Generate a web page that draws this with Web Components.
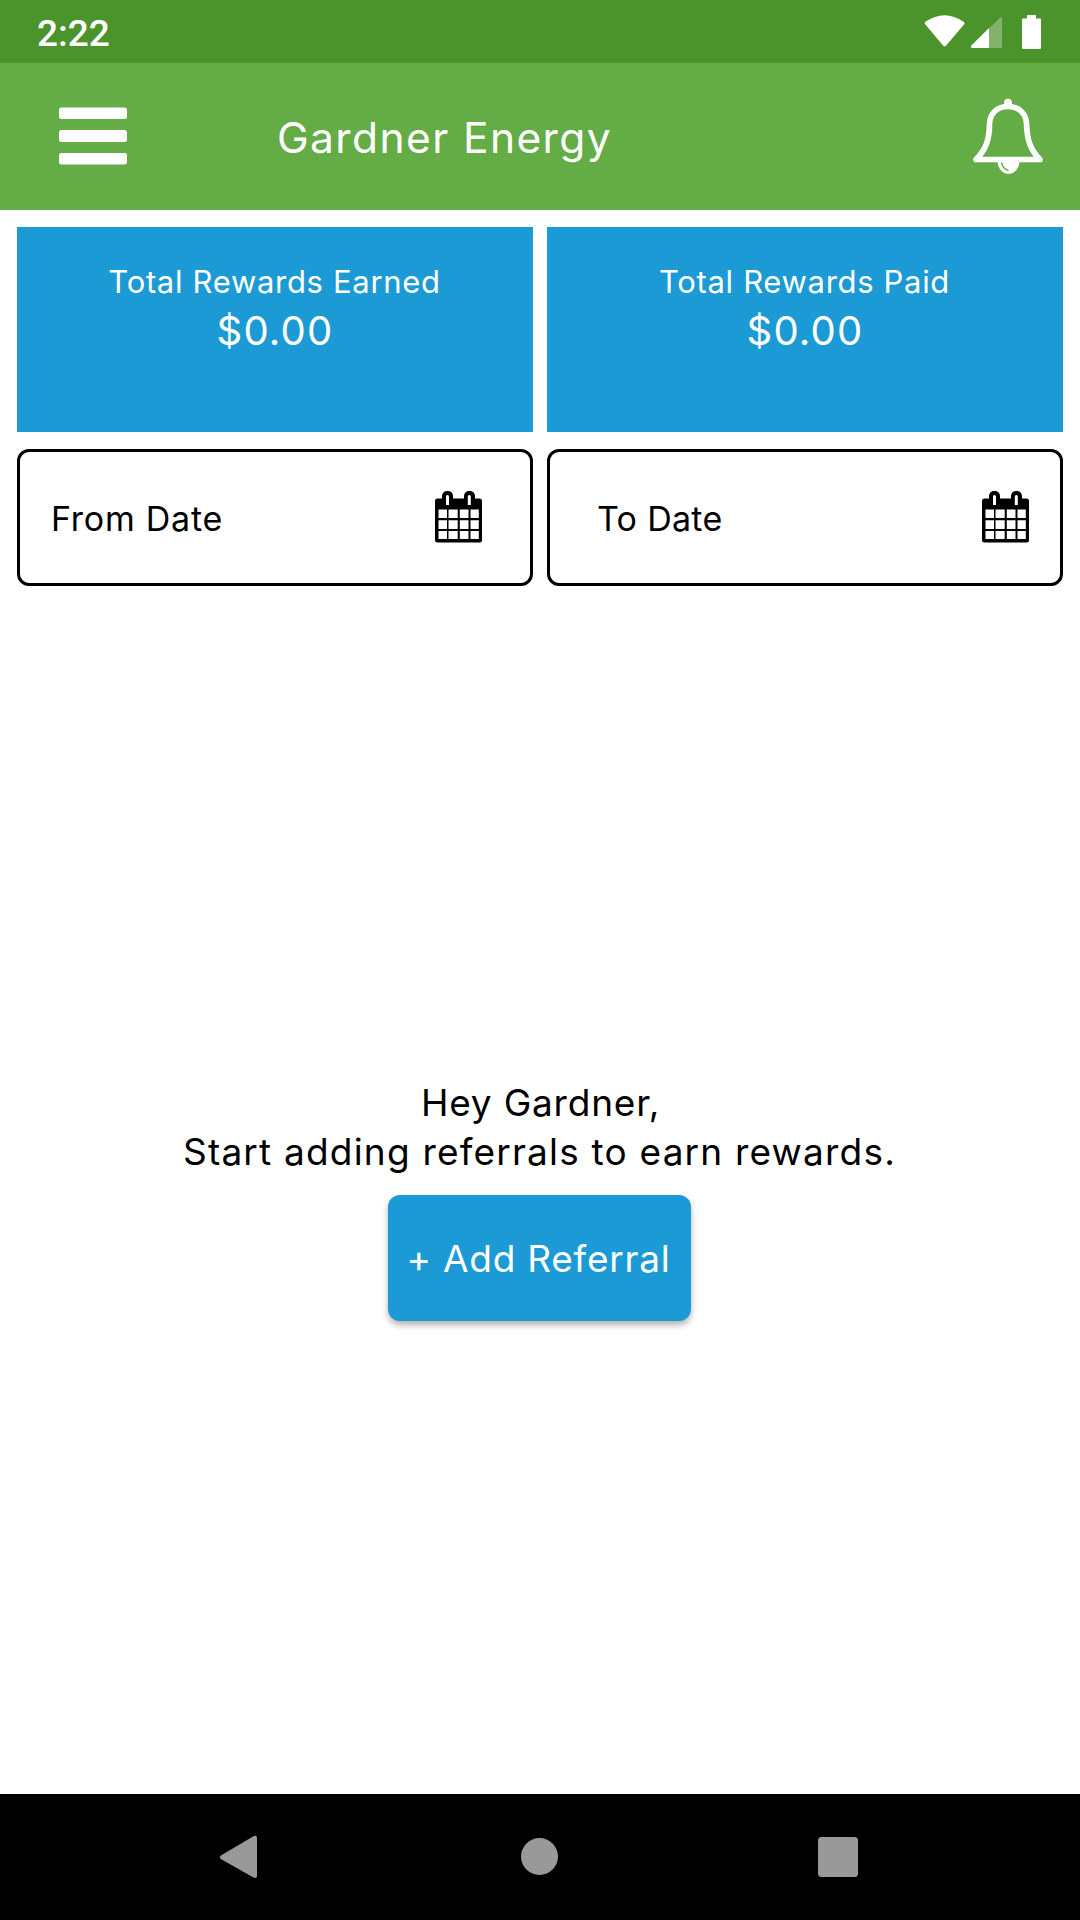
<!DOCTYPE html>
<html lang="en">
<head>
<meta charset="utf-8">
<title>Gardner Energy</title>
<style>
  body {
    margin: 0;
    font-family: Inter, "Liberation Sans", sans-serif;
  }
</style>
</head>
<body>
<rewards-screen></rewards-screen>

<script>
class StatusBar extends HTMLElement {
  constructor() {
    super();
    this.attachShadow({ mode: 'open' });
  }

  connectedCallback() {
    this.shadowRoot.innerHTML = `
      <style>
        :host {
          display: flex;
          align-items: center;
          justify-content: space-between;
          box-sizing: border-box;
          height: 63px;
          padding: 0 36px 0 37px;
          background: #4b932b;
          color: #fff;
          font: 500 37px/44px Roboto, sans-serif;
        }
        span {
          padding-top: 4px;
        }
        svg {
          display: block;
        }
      </style>
      <span><slot></slot></span>
      <svg width="121" height="36" viewBox="923 13 121 36" fill="#fff">
        <path d="M925.2 23.2Q924 22 925.4 20.8Q944.5 7.6 963.7 20.8Q965.3 22 964 23.4L946.2 44.5Q944.6 46.2 943 44.5Z"/>
        <path d="M971.4 44.6L1000.6 16.3Q1002 15.4 1002 17V45.5Q1002 47 1000.5 47H972.3Q969.8 46.6 971.4 44.6Z" opacity=".3"/>
        <path d="M971.4 44.6L989 27V47H972.3Q969.8 46.6 971.4 44.6Z"/>
        <path d="M1027 14H1036V17.5H1040Q1041 17.5 1041 18.5V46.8Q1041 48 1039.8 48H1023.2Q1022 48 1022 46.8V18.5Q1022 17.5 1023 17.5H1027Z"/>
      </svg>
    `;
  }
}

class AppBar extends HTMLElement {
  constructor() {
    super();
    this.attachShadow({ mode: 'open' });
  }

  connectedCallback() {
    this.shadowRoot.innerHTML = `
      <style>
        :host {
          display: flex;
          align-items: center;
          box-sizing: border-box;
          height: 147px;
          padding: 0 36px 1px 59px;
          background: #64ac45;
          color: #fff;
        }
        h1 {
          flex: 1;
          margin: 0 0 0 150px;
          padding-top: 3px;
          font-size: 42.5px;
          font-weight: 400;
          line-height: 50px;
          letter-spacing: 1.4px;
        }
        svg {
          display: block;
        }
      </style>
      <svg width="68" height="58" viewBox="0 0 68 58" fill="#fff">
        <rect y="0.5" width="68" height="11.5" rx="2.5"/>
        <rect y="23" width="68" height="12" rx="2.5"/>
        <rect y="46" width="68" height="11.5" rx="2.5"/>
      </svg>
      <h1><slot></slot></h1>
      <svg width="72" height="78" viewBox="972 96.5 72 78" fill="none" stroke="#fff">
        <path d="M1008 106C996 106 990 114 989.5 123C989.5 139 986 149 976 159H1040C1030 149 1027 139 1026.5 123C1026 114 1020 106 1008 106Z" stroke-width="5.7" stroke-linejoin="round"/>
        <path d="M1004.5 106V102A3.5 3.5 0 0 1 1011.5 102V106Z" fill="#fff" stroke-width="1"/>
        <path d="M998 161A10.5 12 0 0 0 1019 161Z" fill="#fff" stroke-width="1"/>
        <path d="M1001.5 162Q1003 168.5 1008.5 170" stroke="#64ac45" stroke-width="1.3"/>
      </svg>
    `;
  }
}

class RewardCard extends HTMLElement {
  constructor() {
    super();
    this.attachShadow({ mode: 'open' });
  }

  connectedCallback() {
    this.shadowRoot.innerHTML = `
      <style>
        :host {
          display: block;
          box-sizing: border-box;
          height: 205px;
          padding-top: 36px;
          background: #1b9ad6;
          color: #fff;
          text-align: center;
        }
        .label {
          padding-right: 1px;
          font-size: 31px;
          line-height: 38px;
          letter-spacing: 0.68px;
        }
        .amount {
          margin-top: 6px;
          font-size: 40px;
          line-height: 48px;
          letter-spacing: 1.2px;
        }
      </style>
      <div class="label">${this.getAttribute('label')}</div>
      <div class="amount"><slot></slot></div>
    `;
  }
}

class DateField extends HTMLElement {
  constructor() {
    super();
    this.attachShadow({ mode: 'open' });
  }

  connectedCallback() {
    this.shadowRoot.innerHTML = `
      <style>
        :host {
          display: flex;
          align-items: center;
          justify-content: space-between;
          box-sizing: border-box;
          height: 137px;
          padding: 0 var(--field-end, 48px) 0 var(--field-start, 31px);
          border: 3px solid #000;
          border-radius: 12px;
          color: #000;
          font-size: 34px;
          line-height: 42px;
          letter-spacing: var(--field-spacing, 0.75px);
        }
        span {
          padding-top: 2px;
        }
        svg {
          display: block;
          padding-bottom: 1px;
        }
      </style>
      <span><slot></slot></span>
      <svg width="47" height="52" viewBox="0 0 47 52">
        <path d="M2.5 7.5H44.5Q47 7.5 47 10V49Q47 51.5 44.5 51.5H2.5Q0 51.5 0 49V10Q0 7.5 2.5 7.5Z"/>
        <rect x="7" y="0" width="11" height="16" rx="5"/>
        <rect x="29" y="0" width="11" height="16" rx="5"/>
        <path fill="#fff" d="M11 5.5Q11 4 12.5 4T14 5.5V14H11ZM32.8 5.5Q32.8 4 34.3 4T35.8 5.5V14H32.8Z"/>
        <path fill="#fff" d="M3.5 18.5H12V27H3.5ZM13.5 18.5H22.7V27H13.5ZM24.8 18.5H33.5V27H24.8ZM35.5 18.5H43.8V27H35.5ZM3.5 29.3H12V38H3.5ZM13.5 29.3H22.7V38H13.5ZM24.8 29.3H33.5V38H24.8ZM35.5 29.3H43.8V38H35.5ZM3.5 40H12V48H3.5ZM13.5 40H22.7V48H13.5ZM24.8 40H33.5V48H24.8ZM35.5 40H43.8V48H35.5Z"/>
      </svg>
    `;
  }
}

class AddButton extends HTMLElement {
  constructor() {
    super();
    this.attachShadow({ mode: 'open' });
  }

  connectedCallback() {
    this.shadowRoot.innerHTML = `
      <style>
        :host {
          display: block;
        }
        button {
          display: block;
          width: 303px;
          height: 126px;
          padding: 2px 2px 0 0;
          border: none;
          border-radius: 12px;
          background: #1b9ad6;
          box-shadow: 0 4px 6px rgba(0, 0, 0, 0.3);
          color: #fff;
          font: inherit;
          font-size: 37px;
          letter-spacing: 0.75px;
          white-space: nowrap;
        }
      </style>
      <button><slot></slot></button>
    `;
  }
}

class NavBar extends HTMLElement {
  constructor() {
    super();
    this.attachShadow({ mode: 'open' });
  }

  connectedCallback() {
    this.shadowRoot.innerHTML = `
      <style>
        :host {
          display: flex;
          align-items: center;
          justify-content: space-between;
          box-sizing: border-box;
          height: 126px;
          padding: 0 222px 0 219px;
          background: #000;
        }
        svg {
          display: block;
        }
      </style>
      <svg width="40" height="44" viewBox="0 0 40 44" fill="#999">
        <path d="M1.8 20.5L34.5 1.2Q38 0 38 3V41Q38 44 34.5 42.6L1.8 24Q0 22.3 1.8 20.5Z"/>
      </svg>
      <svg width="38" height="38" viewBox="0 0 38 38" fill="#999">
        <circle cx="19.5" cy="18.5" r="18.5"/>
      </svg>
      <svg width="40" height="40" viewBox="0 0 40 40" fill="#999">
        <rect width="40" height="40" rx="3.5"/>
      </svg>
    `;
  }
}

class RewardsScreen extends HTMLElement {
  constructor() {
    super();
    this.attachShadow({ mode: 'open' });
  }

  connectedCallback() {
    this.shadowRoot.innerHTML = `
      <style>
        :host {
          display: flex;
          flex-direction: column;
          width: 1080px;
          height: 1920px;
          background: #fff;
          color: #000;
        }
        .grid {
          display: grid;
          grid-template-columns: 1fr 1fr;
          gap: 17px 14px;
          padding: 17px 17px 0;
        }
        .to {
          --field-start: 47px;
          --field-end: 31px;
          --field-spacing: 0.3px;
        }
        .empty {
          flex: 1;
          display: flex;
          flex-direction: column;
          align-items: center;
          justify-content: center;
          padding: 18px 1px 0 0;
          text-align: center;
        }
        p {
          margin: 0 0 19px;
          font-size: 37px;
          line-height: 49px;
          letter-spacing: 1.2px;
        }
        .greeting {
          padding-left: 2px;
          letter-spacing: 0.8px;
        }
      </style>
      <status-bar>2:22</status-bar>
      <app-bar>Gardner Energy</app-bar>
      <div class="grid">
        <reward-card label="Total Rewards Earned">$0.00</reward-card>
        <reward-card label="Total Rewards Paid">$0.00</reward-card>
        <date-field>From Date</date-field>
        <date-field class="to">To Date</date-field>
      </div>
      <div class="empty">
        <p><span class="greeting">Hey Gardner,</span><br>Start adding referrals to earn rewards.</p>
        <add-button>+ Add Referral</add-button>
      </div>
      <nav-bar></nav-bar>
    `;
  }
}

customElements.define('status-bar', StatusBar);
customElements.define('app-bar', AppBar);
customElements.define('reward-card', RewardCard);
customElements.define('date-field', DateField);
customElements.define('add-button', AddButton);
customElements.define('nav-bar', NavBar);
customElements.define('rewards-screen', RewardsScreen);
</script>
</body>
</html>
